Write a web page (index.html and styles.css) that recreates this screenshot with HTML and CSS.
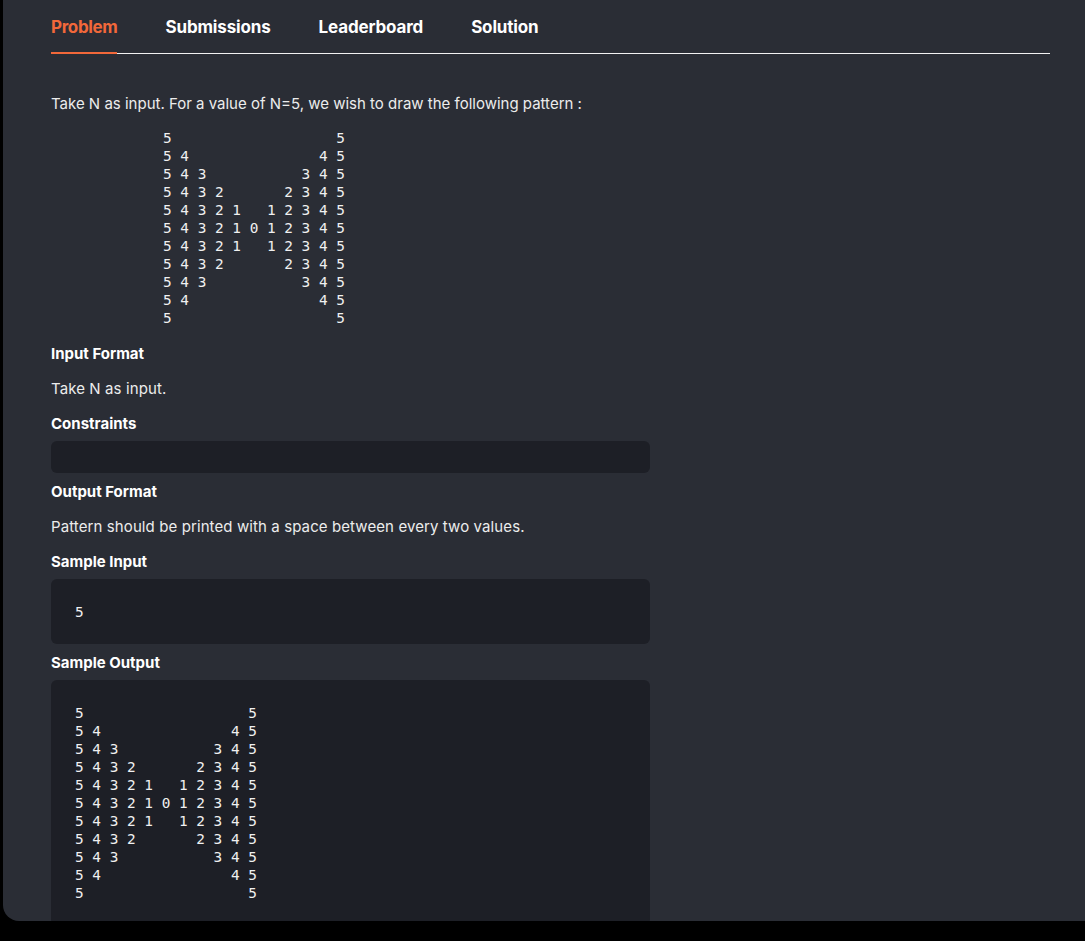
FILE: index.html
```html
<!DOCTYPE html>
<html lang="en">
<head>
<meta charset="utf-8">
<title>Problem</title>
<link rel="stylesheet" href="styles.css">
</head>
<body>
<div class="panel">
  <nav class="tabs">
    <a class="tab active">Problem</a>
    <a class="tab">Submissions</a>
    <a class="tab">Leaderboard</a>
    <a class="tab">Solution</a>
  </nav>
  <div class="content">
    <p class="desc">Take N as input. For a value of N=5, we wish to draw the following pattern :</p>
<pre class="pattern">5                   5
5 4               4 5
5 4 3           3 4 5
5 4 3 2       2 3 4 5
5 4 3 2 1   1 2 3 4 5
5 4 3 2 1 0 1 2 3 4 5
5 4 3 2 1   1 2 3 4 5
5 4 3 2       2 3 4 5
5 4 3           3 4 5
5 4               4 5
5                   5</pre>
    <h3 class="title">Input Format</h3>
    <p class="text">Take N as input.</p>
    <h3 class="title">Constraints</h3>
    <div class="box box-empty"></div>
    <h3 class="title">Output Format</h3>
    <p class="text">Pattern should be printed with a space between every two values.</p>
    <h3 class="title">Sample Input</h3>
    <pre class="box code">5</pre>
    <h3 class="title">Sample Output</h3>
<pre class="box code">5                   5
5 4               4 5
5 4 3           3 4 5
5 4 3 2       2 3 4 5
5 4 3 2 1   1 2 3 4 5
5 4 3 2 1 0 1 2 3 4 5
5 4 3 2 1   1 2 3 4 5
5 4 3 2       2 3 4 5
5 4 3           3 4 5
5 4               4 5
5                   5
</pre>
  </div>
</div>
</body>
</html>
```
FILE: styles.css
```css
html, body {
  margin: 0;
  padding: 0;
  background: #000;
}
body {
  font-family: Inter, "Open Sans", sans-serif;
  color: #ececec;
}
.panel {
  margin-left: 3px;
  width: 1082px;
  height: 921px;
  box-sizing: border-box;
  padding: 0 35px 0 48px;
  background: #2a2d35;
  border-bottom-left-radius: 16px;
  overflow: hidden;
}
.tabs {
  display: flex;
  align-items: flex-start;
  gap: 48px;
  height: 54px;
  box-sizing: border-box;
  border-bottom: 1px solid #f2f2f2;
}
.tab {
  display: block;
  padding-top: 16px;
  font-size: 17px;
  font-weight: 700;
  line-height: 22px;
  color: #ffffff;
  letter-spacing: -0.15px;
  height: 53px;
  box-sizing: border-box;
}
.tab.active {
  color: #f2683a;
  border-bottom: 2px solid #f2683a;
  height: 54px;
  margin-bottom: -1px;
  letter-spacing: -0.35px;
}
.content {
  padding-top: 40px;
}
.desc {
  margin: 0;
  font-size: 15px;
  line-height: 20px;
}
.pattern {
  margin: 15px 0 17px;
  padding-left: 112px;
  font-family: "DejaVu Sans Mono", monospace;
  font-size: 14.4px;
  line-height: 18px;
  color: #f0f0f0;
}
.title {
  margin: 0;
  font-size: 15px;
  font-weight: 700;
  line-height: 20px;
  color: #ffffff;
}
.title + .box {
  margin-top: 7px;
}
.text {
  margin: 15px 0 15px;
  font-size: 15px;
  line-height: 20px;
  letter-spacing: 0.1px;
}
.box {
  width: 599px;
  box-sizing: border-box;
  background: #1d1f26;
  border-radius: 6px;
  margin: 0 0 9px;
}
.box-empty {
  height: 32px;
}
.code {
  padding: 24px 24px 23px;
  font-family: "DejaVu Sans Mono", monospace;
  font-size: 14.4px;
  line-height: 18px;
  color: #f0f0f0;
}
```
